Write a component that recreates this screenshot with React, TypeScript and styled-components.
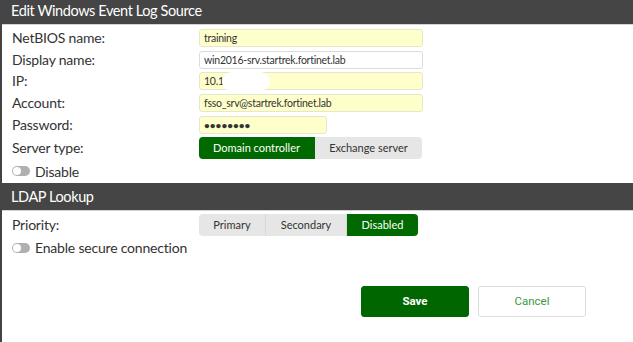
import React from "react";
import styled, { createGlobalStyle } from "styled-components";

const Global = createGlobalStyle`
  html, body { margin: 0; padding: 0; background: #fff; }
  body { font-family: Lato, "Open Sans", sans-serif; color: #333; }
`;

const Page = styled.div`
  width: 633px;
  height: 342px;
  box-sizing: border-box;
  border-left: 2px solid #444;
  display: flex;
  flex-direction: column;
  overflow: hidden;
`;

const Header = styled.div<{ $h: number; $pt: number }>`
  height: ${(p) => p.$h}px;
  box-sizing: border-box;
  padding: ${(p) => p.$pt}px 0 0 11px;
  margin-left: -2px;
  background: #454545;
  color: #fff;
  font-size: 14.5px;
  letter-spacing: -0.4px;
  line-height: 18px;
  border-bottom: 1px solid #d4d4d4;
`;

const Section = styled.div<{ $pt: number }>`
  display: flex;
  flex-direction: column;
  padding: ${(p) => p.$pt}px 0 0 10px;
`;

const Row = styled.div<{ $h: number }>`
  display: flex;
  align-items: center;
  height: ${(p) => p.$h}px;
`;

const Label = styled.div`
  width: 187px;
  font-size: 14px;
  letter-spacing: -0.2px;
  color: #333;
  margin-top: -1px;
`;

const Field = styled.div<{ $w: number; $yellow?: boolean }>`
  position: relative;
  width: ${(p) => p.$w}px;
  height: 18px;
  box-sizing: border-box;
  border: 1px solid ${(p) => (p.$yellow ? "#e6e6c8" : "#dcdcdc")};
  border-radius: 3px;
  background: ${(p) => (p.$yellow ? "#ffffcc" : "#fff")};
  font-size: 10.5px;
  letter-spacing: -0.25px;
  line-height: 16px;
  padding-left: 4px;
  color: #333;
  white-space: nowrap;
`;

const Dots = styled.span`
  font-size: 10px;
  letter-spacing: 0px;
  font-weight: 700;
`;

const Redact = styled.div`
  position: absolute;
  left: 22px;
  top: -1px;
  width: 48px;
  height: 19px;
  background: #fff;
  border-radius: 10px;
`;

const Seg = styled.div`
  display: flex;
  height: 22px;
  border-radius: 4px;
  overflow: hidden;
`;

const SegBtn = styled.div<{ $w: number; $on?: boolean }>`
  width: ${(p) => p.$w}px;
  display: flex;
  align-items: center;
  justify-content: center;
  font-size: 11px;
  background: ${(p) => (p.$on ? "#006a00" : "#e6e6e6")};
  color: ${(p) => (p.$on ? "#fff" : "#333")};
  border-right: 1px solid ${(p) => (p.$on ? "transparent" : "#d8d8d8")};
  &:last-child { border-right: none; }
`;

const Toggle = styled.div`
  width: 18px;
  height: 10px;
  border-radius: 5px;
  background: #b0b0b0;
  position: relative;
  margin-right: 5px;
  &::after {
    content: "";
    position: absolute;
    left: 1px;
    top: 1px;
    width: 8px;
    height: 8px;
    border-radius: 50%;
    background: #fff;
  }
`;

const ToggleText = styled.span`
  font-size: 14px;
  letter-spacing: -0.2px;
  color: #333;
`;

const Footer = styled.div`
  display: flex;
  justify-content: flex-end;
  gap: 9px;
  padding: 27px 47px 0 0;
`;

const Btn = styled.div<{ $primary?: boolean }>`
  width: 108px;
  height: 31px;
  box-sizing: border-box;
  border-radius: 3px;
  display: flex;
  align-items: center;
  justify-content: center;
  font-family: Roboto, "Liberation Sans", sans-serif;
  font-size: 11.5px;
  font-weight: ${(p) => (p.$primary ? 700 : 400)};
  background: ${(p) => (p.$primary ? "#006600" : "#fff")};
  color: ${(p) => (p.$primary ? "#fff" : "#3c9a3c")};
  border: 1px solid ${(p) => (p.$primary ? "#006600" : "#dddddd")};
`;

export default function App() {
  return (
    <>
      <Global />
      <Page>
        <Header $h={25} $pt={2}>Edit Windows Event Log Source</Header>
        <Section $pt={2}>
          <Row $h={21.75}>
            <Label>NetBIOS name:</Label>
            <Field $w={224} $yellow>training</Field>
          </Row>
          <Row $h={21.75}>
            <Label>Display name:</Label>
            <Field $w={224}>win2016-srv.startrek.fortinet.lab</Field>
          </Row>
          <Row $h={21.75}>
            <Label>IP:</Label>
            <Field $w={224} $yellow>
              10.1
              <Redact />
            </Field>
          </Row>
          <Row $h={21.75}>
            <Label>Account:</Label>
            <Field $w={224} $yellow>fsso_srv@startrek.fortinet.lab</Field>
          </Row>
          <Row $h={21.75}>
            <Label>Password:</Label>
            <Field $w={128} $yellow>
              <Dots>••••••••</Dots>
            </Field>
          </Row>
          <Row $h={24}>
            <Label>Server type:</Label>
            <Seg>
              <SegBtn $w={115} $on>Domain controller</SegBtn>
              <SegBtn $w={107}>Exchange server</SegBtn>
            </Seg>
          </Row>
          <Row $h={23}>
            <Toggle />
            <ToggleText>Disable</ToggleText>
          </Row>
        </Section>
        <Header $h={28} $pt={5}>LDAP Lookup</Header>
        <Section $pt={2}>
          <Row $h={24}>
            <Label>Priority:</Label>
            <Seg>
              <SegBtn $w={66}>Primary</SegBtn>
              <SegBtn $w={80}>Secondary</SegBtn>
              <SegBtn $w={71} $on>Disabled</SegBtn>
            </Seg>
          </Row>
          <Row $h={22}>
            <Toggle />
            <ToggleText>Enable secure connection</ToggleText>
          </Row>
        </Section>
        <Footer>
          <Btn $primary>Save</Btn>
          <Btn>Cancel</Btn>
        </Footer>
      </Page>
    </>
  );
}
